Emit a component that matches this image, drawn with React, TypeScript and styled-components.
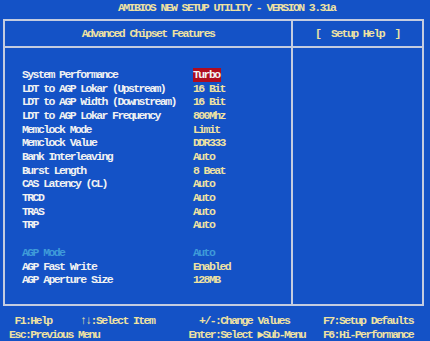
import React from "react";
import styled, { createGlobalStyle } from "styled-components";

const BLUE = "#1452c6";
const LINE = "#c4cce0";
const CREAM = "#efe2a2";
const WHITE = "#f2f2f2";
const DIM = "#3f9bd9";

const Global = createGlobalStyle`
  html, body { margin: 0; padding: 0; background: ${BLUE}; }
  body {
    width: 430px; height: 341px; overflow: hidden;
    font-family: "Liberation Mono", "DejaVu Sans Mono", monospace;
    font-weight: bold;
    font-size: 11.5px;
    letter-spacing: -1.6px;
  }
`;

const Screen = styled.div`
  width: 430px;
  height: 341px;
  background: ${BLUE};
  display: flex;
  flex-direction: column;
`;

const TitleBar = styled.div`
  height: 19px;
  line-height: 16px;
  padding-left: 118px;
  color: ${CREAM};
  white-space: pre;
`;

const Box = styled.div`
  margin-left: 3px;
  width: 421px;
  height: 289px;
  box-sizing: border-box;
  border: 2px solid ${LINE};
  display: grid;
  grid-template-columns: 286px 1fr;
  grid-template-rows: 27px 1fr;
`;

const HeadCell = styled.div<{ $divider?: boolean }>`
  border-bottom: 2px solid ${LINE};
  border-left: ${(p) => (p.$divider ? `2px solid ${LINE}` : "none")};
  display: flex;
  align-items: center;
  justify-content: center;
  color: ${CREAM};
  white-space: pre;
`;

const BodyLeft = styled.div`
  padding: 20px 0 0 17px;
  display: flex;
  flex-direction: column;
`;

const BodyRight = styled.div`
  border-left: 2px solid ${LINE};
`;

const Row = styled.div`
  display: grid;
  grid-template-columns: 171px auto;
  line-height: 13.7px;
  height: 13.7px;
  white-space: pre;
`;

const Label = styled.span<{ $dim?: boolean }>`
  color: ${(p) => (p.$dim ? DIM : WHITE)};
`;

const Value = styled.span<{ $dim?: boolean; $sel?: boolean }>`
  justify-self: start;
  color: ${(p) => (p.$sel ? WHITE : p.$dim ? DIM : CREAM)};
  background: ${(p) => (p.$sel ? "#b00c1e" : "transparent")};
  padding-right: ${(p) => (p.$sel ? "1px" : "0")};
`;

const Spacer = styled.div`
  height: 13.7px;
`;

const Footer = styled.div`
  flex: 1;
  display: grid;
  grid-template-columns: 80px 100px 143px auto;
  grid-auto-rows: 13.4px;
  align-content: start;
  padding-top: 8px;
  color: ${CREAM};
  white-space: pre;
  line-height: 13.4px;
`;

const Item = styled.div`
  display: flex;
`;

const Key = styled.span<{ $w?: number }>`
  display: inline-block;
  flex-shrink: 0;
  width: ${(p) => (p.$w ? `${p.$w}px` : "auto")};
  text-align: right;
`;

type R = { label: string; value: string; dim?: boolean; sel?: boolean };

const group1: R[] = [
  { label: "System Performance", value: "Turbo", sel: true },
  { label: "LDT to AGP Lokar (Upstream)", value: "16 Bit" },
  { label: "LDT to AGP Width (Downstream)", value: "16 Bit" },
  { label: "LDT to AGP Lokar Frequency", value: "800Mhz" },
  { label: "Memclock Mode", value: "Limit" },
  { label: "Memclock Value", value: "DDR333" },
  { label: "Bank Interleaving", value: "Auto" },
  { label: "Burst Length", value: "8 Beat" },
  { label: "CAS Latency (CL)", value: "Auto" },
  { label: "TRCD", value: "Auto" },
  { label: "TRAS", value: "Auto" },
  { label: "TRP", value: "Auto" },
];

const group2: R[] = [
  { label: "AGP Mode", value: "Auto", dim: true },
  { label: "AGP Fast Write", value: "Enabled" },
  { label: "AGP Aperture Size", value: "128MB" },
];

const renderRow = (r: R) => (
  <Row key={r.label}>
    <Label $dim={r.dim}>{r.label}</Label>
    <Value $dim={r.dim} $sel={r.sel}>
      {r.value}
    </Value>
  </Row>
);

export default function App() {
  return (
    <Screen>
      <Global />
      <TitleBar>AMIBIOS NEW SETUP UTILITY - VERSION 3.31a</TitleBar>
      <Box>
        <HeadCell>Advanced Chipset Features</HeadCell>
        <HeadCell $divider>{"[  Setup Help  ]"}</HeadCell>
        <BodyLeft>
          {group1.map(renderRow)}
          <Spacer />
          {group2.map(renderRow)}
        </BodyLeft>
        <BodyRight />
      </Box>
      <Footer>
        <Item>
          <Key $w={25}>F1</Key>:Help
        </Item>
        <Item>
          <Key>↑↓</Key>:Select Item
        </Item>
        <Item>
          <Key $w={35}>+/-</Key>:Change Values
        </Item>
        <Item>
          <Key>F7</Key>:Setup Defaults
        </Item>
        <Item>
          <Key $w={25}>Esc</Key>:Previous Menu
        </Item>
        <Item />
        <Item>
          <Key $w={35}>Enter</Key>:Select ▶Sub-Menu
        </Item>
        <Item>
          <Key>F6</Key>:Hi-Performance
        </Item>
      </Footer>
    </Screen>
  );
}
